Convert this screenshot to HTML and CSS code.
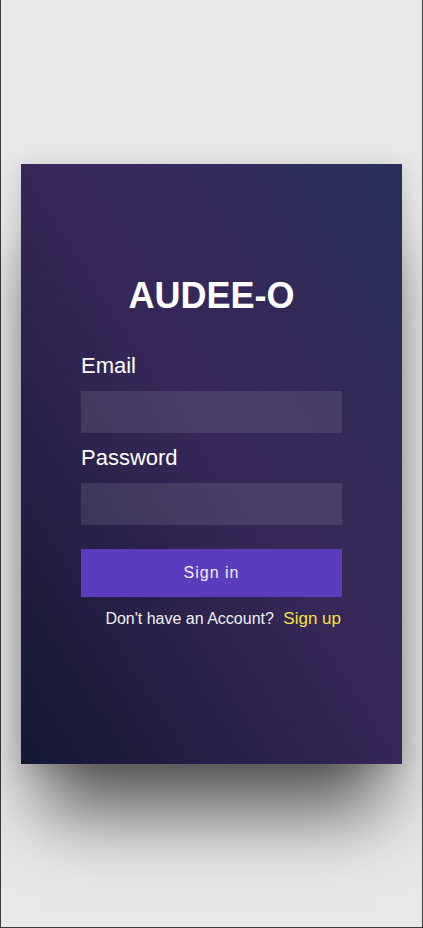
FILE: index.html
```html
<!DOCTYPE html>
<html lang="en">
<head>
<meta charset="utf-8">
<title>AUDEE-O</title>
<link rel="stylesheet" href="styles.css">
</head>
<body>
<div class="frame">
  <div class="card">
    <h1 class="title">AUDEE-O</h1>
    <form class="form">
      <label class="label" for="email">Email</label>
      <input class="field" id="email" type="email">
      <label class="label label-gap" for="password">Password</label>
      <input class="field" id="password" type="password">
      <button class="btn" type="button">Sign in</button>
      <p class="footer">Don't have an Account? <a class="signup" href="#">Sign up</a></p>
    </form>
  </div>
</div>
</body>
</html>
```

FILE: styles.css
```css
* { box-sizing: border-box; }
html, body { margin: 0; padding: 0; }
body {
  background: #e8e8e8;
  font-family: "Liberation Sans", Arial, sans-serif;
}
.frame {
  min-height: 928px;
  border-left: 1px solid #3a3a3a;
  border-right: 1px solid #3a3a3a;
  border-bottom: 1px solid #3a3a3a;
  padding: 164px 20px 0;
}
.card {
  height: 600px;
  background: linear-gradient(to top right, #141832 0%, #282048 28%, #372759 52%, #342858 70%, #25305a 100%);
  box-shadow: 0 68px 70px -20px rgba(0, 0, 0, 0.62), 0 4px 24px rgba(0, 0, 0, 0.16);
  padding: 111px 60px 0;
  color: #fff;
}
.title {
  margin: 0;
  font-size: 36px;
  line-height: 42px;
  font-weight: bold;
  text-align: center;
}
.form {
  margin: 37px 0 0;
  display: flex;
  flex-direction: column;
}
.label {
  font-size: 22px;
  line-height: 24px;
  margin-bottom: 13px;
}
.label-gap { margin-top: 13px; }
.field {
  height: 42px;
  border: none;
  outline: none;
  background: rgba(255, 255, 255, 0.1);
  color: #fff;
  padding: 0 10px;
  font-size: 16px;
  font-family: inherit;
}
.btn {
  margin-top: 24px;
  height: 48px;
  border: none;
  background: #5d3bbd;
  color: #f2f0fa;
  font-family: inherit;
  font-size: 16px;
  letter-spacing: 1px;
  line-height: 48px;
  padding: 0;
}
.footer {
  margin: 13px 0 0;
  font-size: 16px;
  line-height: 18px;
  text-align: right;
  color: #f0f0f4;
  padding-right: 1px;
}
.signup {
  color: #f3e53a;
  font-size: 17px;
  text-decoration: none;
  margin-left: 5px;
}
```
